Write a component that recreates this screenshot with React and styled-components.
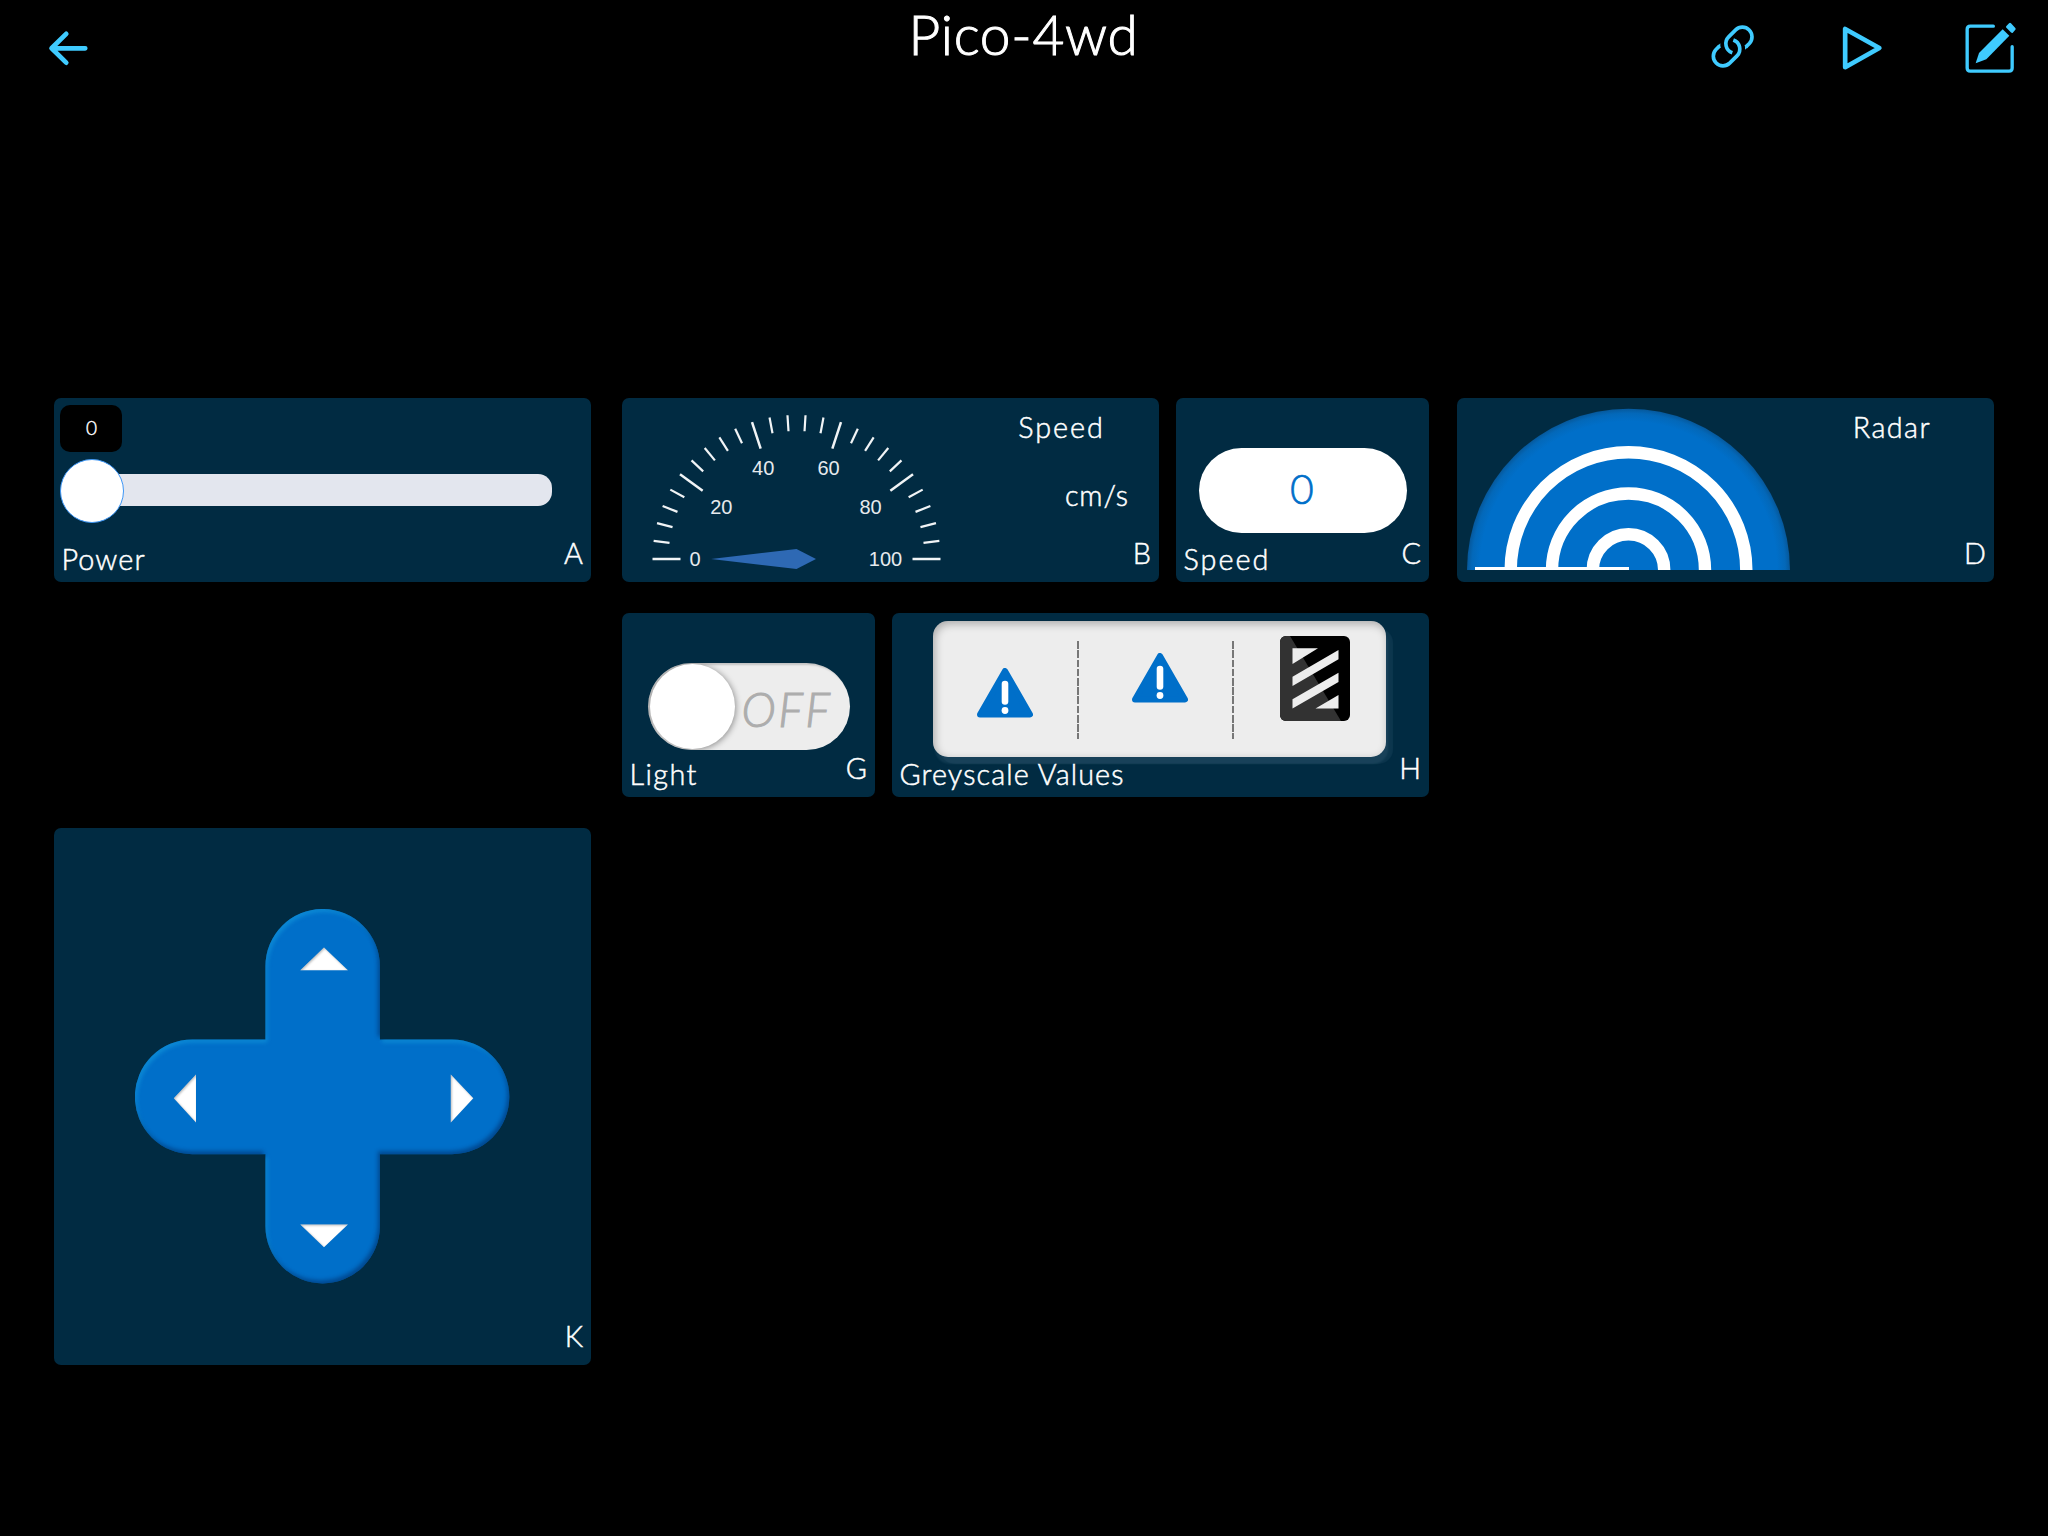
import React from "react";
import styled, { createGlobalStyle } from "styled-components";

const SANS = '"Lato", "Liberation Sans", sans-serif';
const NAVY = "#012b42";
const BLUE = "#006fc9";
const CYAN = "#3fcbff";

const GlobalStyle = createGlobalStyle`
  html, body { margin: 0; background: #000; }
  *, *::before, *::after { box-sizing: border-box; }
  svg { display: block; flex: none; }
`;

const Screen = styled.div`
  width: 2048px;
  height: 1536px;
  overflow: hidden;
  background: #000;
  color: #fff;
  font-family: ${SANS};
  font-weight: 300;
`;

const Header = styled.header`
  display: grid;
  grid-template-columns: 1fr auto 1fr;
  height: 398px;
  padding: 0 30px 0 47px;
`;

const HeaderSide = styled.div`
  display: flex;
  justify-content: ${(p) => p.$align};
  align-items: center;
  height: 96px;
  gap: 79px;
`;

const LinkSlot = styled.div`
  margin: 0 6px 2px 0;
`;

const Title = styled.h1`
  margin: 0 18px 0 0;
  font-size: 55px;
  line-height: 68px;
  font-weight: 300;
  letter-spacing: 0.75px;
  white-space: nowrap;
  -webkit-text-stroke: 1px #fff;
`;

const Board = styled.main`
  display: grid;
  grid-template-columns: 537px 31px 807px 28px 537px;
  grid-template-rows: 184px 184px 537px;
  row-gap: 31px;
  margin-left: 54px;
`;

const Cell = styled.div`
  grid-column: ${(p) => p.$col};
  grid-row: ${(p) => p.$row};
  display: flex;
  gap: 17px;
`;

const Card = styled.section`
  display: flex;
  flex-direction: ${(p) => (p.$row ? "row" : "column")};
  width: ${(p) => (p.$narrow ? 253 : 537)}px;
  background: ${NAVY};
  border-radius: 7px;
`;

const Body = styled.div`
  height: ${(p) => p.$height || 137}px;
  padding-top: ${(p) => p.$top || 0}px;
  padding-left: ${(p) => p.$left || 0}px;
`;

const Footer = styled.footer`
  display: flex;
  justify-content: space-between;
  align-items: flex-start;
  padding: 0 8px 0 7.5px;
`;

const Label = styled.span`
  font-size: 28.8px;
  line-height: 36px;
  letter-spacing: ${(p) => p.$spacing || 0}px;
  margin-top: ${(p) => p.$top || 0}px;
  margin-right: ${(p) => p.$right || 0}px;
  white-space: nowrap;
  -webkit-text-stroke: 0.5px #fff;
`;

const SideInfo = styled.div`
  flex: 1;
  display: flex;
  flex-direction: column;
  align-items: flex-end;
  padding-top: 11px;
`;

const ValueBadge = styled.div`
  display: flex;
  align-items: center;
  justify-content: center;
  width: 62px;
  height: 47px;
  padding-bottom: 2px;
  background: #000;
  border-radius: 10px;
  font-size: 19px;
  -webkit-text-stroke: 0.4px #fff;
`;

const Slider = styled.div`
  display: flex;
  align-items: center;
  width: 492px;
  height: 64px;
  margin-top: 7px;
`;

const Knob = styled.div`
  flex: none;
  width: 64px;
  height: 64px;
  border-radius: 50%;
  background: #fff;
  border: 1px solid #3f97f6;
  z-index: 1;
`;

const Track = styled.div`
  flex: 1;
  height: 32px;
  margin: -2px 0 0 -10px;
  background: #e3e6ee;
  border-radius: 0 14px 14px 0;
`;

const NumberPill = styled.div`
  display: flex;
  align-items: center;
  justify-content: center;
  width: 208px;
  height: 85px;
  padding: 0 2px 4px 0;
  border-radius: 43px;
  background: #fff;
  color: ${BLUE};
  font-size: 41px;
  -webkit-text-stroke: 0.6px ${BLUE};
`;

const Switch = styled.div`
  display: flex;
  align-items: center;
  width: 202px;
  height: 87px;
  padding-left: 2px;
  overflow: hidden;
  border-radius: 44px;
  background: #ededed;
  box-shadow: inset 2px 2px 2px rgba(0, 0, 0, 0.18);
`;

const SwitchThumb = styled.div`
  flex: none;
  width: 85px;
  height: 85px;
  border-radius: 50%;
  background: #fff;
  box-shadow: 1px 1px 6px rgba(0, 0, 0, 0.4);
`;

const SwitchText = styled.span`
  margin: 5px 0 0 6.5px;
  color: #adadad;
  font-size: 46.5px;
  line-height: 56px;
  font-style: italic;
  letter-spacing: 2.4px;
  -webkit-text-stroke: 1px #adadad;
`;

const SensorPanel = styled.div`
  display: flex;
  width: 453px;
  height: 136px;
  border-radius: 15px;
  background: #ededed;
  box-shadow:
    inset 2px 3px 9px rgba(0, 0, 0, 0.28),
    7px 7px 1px 0 rgba(60, 100, 125, 0.2),
    2px 7px 2px 0 rgba(60, 100, 125, 0.26);
`;

const Sensor = styled.div`
  display: flex;
  flex: none;
  justify-content: center;
  width: ${(p) => p.$width}px;
  padding-top: ${(p) => p.$top}px;
  padding-left: ${(p) => p.$left || 0}px;
`;

const Divider = styled.div`
  flex: none;
  width: 2px;
  height: 98px;
  margin-top: 20px;
  background: repeating-linear-gradient(#777 0 7.7px, transparent 7.7px 9.25px);
`;

function BackIcon() {
  return (
    <svg width="44" height="40" viewBox="47 28 44 40" fill="none" stroke={CYAN} strokeWidth="4.8" strokeLinecap="round" strokeLinejoin="round">
      <path d="M85.2 48.3H51.8M66.2 33.9 51.6 48.3 66.2 62.6" />
    </svg>
  );
}

function LinkIcon() {
  return (
    <svg width="46" height="46" viewBox="90 72 138 138" fill="none" stroke={CYAN} strokeWidth="11">
      <clipPath id="lowLoop"><path d="M80 60H121V150H240V220H80ZM121 110H240V150H121Z" /></clipPath>
      <path clipPath="url(#lowLoop)" d="M119 137.500 108 148.5A29 29 0 0 0 149 189.5L171 167.5A29 29 0 0 0 160 119.7" />
      <path d="M121 130V143L112 139Z" fill={CYAN} stroke="none" />
      <path d="M197 141.5 208 130.5A29 29 0 0 0 167 89.5L146 110.5A29 29 0 0 0 157 158.3" />
      <path d="M195 136V149L204 141Z" fill={CYAN} stroke="none" />
    </svg>
  );
}

function PlayIcon() {
  return (
    <svg width="44" height="46" viewBox="484 76 132 138" fill="none" stroke={CYAN} strokeWidth="14" strokeLinejoin="round">
      <path d="M496.500 88V202.500L599 145Z" />
    </svg>
  );
}

function EditIcon() {
  return (
    <svg width="54" height="54" viewBox="852 62 162 162" fill="none" stroke={CYAN} strokeWidth="10" strokeLinecap="round">
      <path d="M940 77.500H871Q861.500 77.500 861.500 87V203Q861.500 212.500 871 212.500H987Q996.500 212.500 996.500 203V139" />
      <path d="M968 87 988 106 919 177 887 189 897 158Z" fill={CYAN} stroke="none" />
      <path d="M990 71.500 1003 85.500 996 93.500 982 79.500Z" fill={CYAN} strokeWidth="8" strokeLinejoin="round" />
    </svg>
  );
}

const TICKS = Array.from({ length: 26 }, (_, i) => i);
const GAUGE_LABELS = [
  [0, 73, 161], [20, 99.3, 109], [40, 141.2, 70],
  [60, 206.5, 70], [80, 248.6, 109], [100, 263.5, 161],
];

function Gauge() {
  const cx = 174.5;
  const cy = 161;
  return (
    <svg width="340" height="184" viewBox="0 0 340 184">
      {TICKS.map((i) => {
        const a = Math.PI - (i * Math.PI) / 25;
        const major = i % 5 === 0;
        const inner = major ? 116 : 128;
        return (
          <line
            key={i}
            x1={cx + 144 * Math.cos(a)}
            y1={cy - 144 * Math.sin(a)}
            x2={cx + inner * Math.cos(a)}
            y2={cy - inner * Math.sin(a)}
            stroke="#f1f4f6"
            strokeWidth={major ? 2.5 : 2.2}
          />
        );
      })}
      {GAUGE_LABELS.map(([value, x, y]) => (
        <text key={value} x={x} y={y + 7} textAnchor="middle" fill="#e6eaed" fontSize="20" fontWeight="400" fontFamily='"Liberation Sans", sans-serif'>
          {value}
        </text>
      ))}
      <path d="M89 161 174.500 151 194 161 174.500 171Z" fill="#2e69b4" />
    </svg>
  );
}

function Radar() {
  return (
    <svg width="340" height="184" viewBox="0 0 340 184">
      <defs>
        <radialGradient id="dome" gradientUnits="userSpaceOnUse" cx="171.500" cy="172" r="161.500">
          <stop offset="0.920" stopColor={BLUE} />
          <stop offset="0.970" stopColor="#0368b9" />
          <stop offset="1" stopColor="#06589b" />
        </radialGradient>
      </defs>
      <path d="M10 172A161.500 161.300 0 0 1 333 172Z" fill="url(#dome)" />
      {[117.8, 76.5, 35.7].map((r) => (
        <path key={r} d={`M${171.5 - r} 172A${r} ${r} 0 0 1 ${171.5 + r} 172`} fill="none" stroke="#fff" strokeWidth="12.4" />
      ))}
      <path d="M18 170.500H172" stroke="#fff" strokeWidth="3" />
    </svg>
  );
}

function Warning() {
  return (
    <svg width="56" height="50" viewBox="0 0 56 50">
      <path d="M28 3 53 46.500H3Z" fill={BLUE} stroke={BLUE} strokeWidth="6" strokeLinejoin="round" />
      <path d="M28 16V33.500" stroke="#fff" strokeWidth="6.600" strokeLinecap="round" />
      <circle cx="28" cy="42.500" r="3.400" fill="#fff" />
    </svg>
  );
}

function Cliff() {
  return (
    <svg width="70" height="85" viewBox="0 0 70 85">
      <clipPath id="cliffBox"><rect width="70" height="85" rx="6" /></clipPath>
      <g clipPath="url(#cliffBox)">
        <path d="M0 0H70V85H0Z" fill="#000" />
        <path d="M0 0H10L61 85H0Z" fill="#323232" />
      </g>
      <path d="M12.500 12.300H38L12.500 28ZM12.500 40.700 58.500 14V23.300L12.500 50ZM12.500 63.300 58.500 36.800V46L12.500 72.500ZM35.500 72.500 58.500 59V72.500Z" fill="#ededed" />
    </svg>
  );
}

function InnerShade({ id, d, dx, dy, blur, color, opacity }) {
  return (
    <g clipPath={`url(#${id})`}>
      <path
        d={`M-60 -60H460V460H-60Z${d}`}
        fillRule="evenodd"
        fill={color}
        opacity={opacity}
        transform={`translate(${dx} ${dy})`}
        style={{ filter: `blur(${blur}px)` }}
      />
    </g>
  );
}

const CROSS =
  "M130.400 57.200A57.200 57.200 0 0 1 244.900 57.200V130.500H317A57.200 57.200 0 0 1 317 245.200H244.900V317.200A57.200 57.200 0 0 1 130.400 317.200V245.200H57.200A57.200 57.200 0 0 1 57.200 130.500H130.400Z";
const ARROWS =
  "M165.300 61.200 189 38.500 212.900 61.200ZM165.300 315.500 189 338.300 212.900 315.500ZM61 165.400 38.800 189.300 61 213.400ZM315.800 165.400 338.300 189.300 315.800 213.400Z";

function DPad() {
  return (
    <svg width="375" height="375" viewBox="0 0 375 375">
      <clipPath id="cross"><path d={CROSS} /></clipPath>
      <clipPath id="arrows"><path d={ARROWS} /></clipPath>
      <path d={CROSS} fill={BLUE} />
      <InnerShade id="cross" d={CROSS} dx={2} dy={3} blur={2} color="#16a0e0" opacity={0.55} />
      <InnerShade id="cross" d={CROSS} dx={-2} dy={-3} blur={2} color="#002f6b" opacity={0.6} />
      <path d={ARROWS} fill="#fff" />
      <InnerShade id="arrows" d={ARROWS} dx={1} dy={1} blur={1.2} color="#555" opacity={0.4} />
    </svg>
  );
}

export default function App() {
  return (
    <Screen>
      <GlobalStyle />
      <Header>
        <HeaderSide $align="flex-start">
          <BackIcon />
        </HeaderSide>
        <Title>Pico-4wd</Title>
        <HeaderSide $align="flex-end">
          <LinkSlot>
            <LinkIcon />
          </LinkSlot>
          <PlayIcon />
          <EditIcon />
        </HeaderSide>
      </Header>

      <Board>
        <Cell $col={1} $row={1}>
          <Card>
            <Body $top={7} $left={6.4}>
              <ValueBadge>0</ValueBadge>
              <Slider>
                <Knob />
                <Track />
              </Slider>
            </Body>
            <Footer>
              <Label $top={6} $spacing={1.1}>Power</Label>
              <Label>A</Label>
            </Footer>
          </Card>
        </Cell>

        <Cell $col={3} $row={1}>
          <Card $row>
            <Gauge />
            <SideInfo>
              <Label $right={54} $spacing={2}>Speed</Label>
              <Label $top={32} $right={30} $spacing={0.9}>cm/s</Label>
              <Label $top={22} $right={8}>B</Label>
            </SideInfo>
          </Card>
          <Card $narrow>
            <Body $top={50} $left={23}>
              <NumberPill>0</NumberPill>
            </Body>
            <Footer>
              <Label $top={6} $spacing={2}>Speed</Label>
              <Label>C</Label>
            </Footer>
          </Card>
        </Cell>

        <Cell $col={5} $row={1}>
          <Card $row>
            <Radar />
            <SideInfo>
              <Label $right={63} $spacing={1.4}>Radar</Label>
              <Label $top={90} $right={8}>D</Label>
            </SideInfo>
          </Card>
        </Cell>

        <Cell $col={3} $row={2}>
          <Card $narrow>
            <Body $top={50} $left={26}>
              <Switch>
                <SwitchThumb />
                <SwitchText>OFF</SwitchText>
              </Switch>
            </Body>
            <Footer>
              <Label $top={6} $spacing={1.4}>Light</Label>
              <Label>G</Label>
            </Footer>
          </Card>
          <Card>
            <Body $top={8} $left={41}>
              <SensorPanel>
                <Sensor $width={144} $top={47}><Warning /></Sensor>
                <Divider />
                <Sensor $width={153} $top={32} $left={8}><Warning /></Sensor>
                <Divider />
                <Sensor $width={152} $top={15} $left={9}><Cliff /></Sensor>
              </SensorPanel>
            </Body>
            <Footer>
              <Label $top={6} $spacing={1.1}>Greyscale Values</Label>
              <Label>H</Label>
            </Footer>
          </Card>
        </Cell>

        <Cell $col={1} $row={3}>
          <Card>
            <Body $height={490} $top={81} $left={81}>
              <DPad />
            </Body>
            <Footer>
              <span />
              <Label>K</Label>
            </Footer>
          </Card>
        </Cell>
      </Board>
    </Screen>
  );
}
